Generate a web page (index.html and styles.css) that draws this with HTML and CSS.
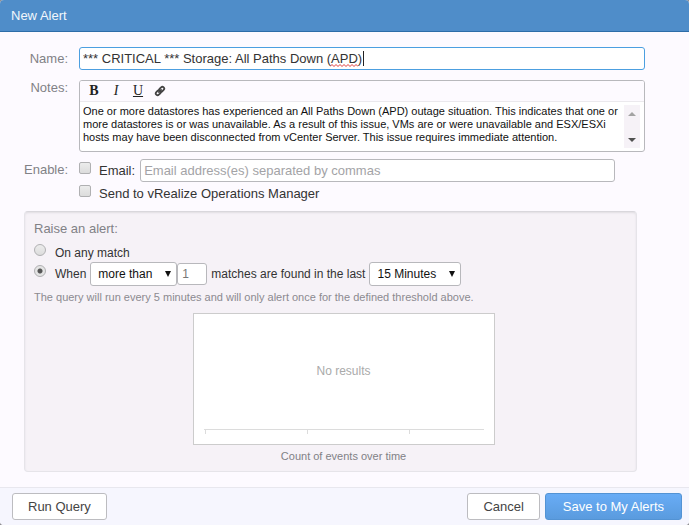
FILE: index.html
```html
<!DOCTYPE html>
<html lang="en">
<head>
<meta charset="utf-8">
<title>New Alert</title>
<link rel="stylesheet" href="styles.css">
</head>
<body>
<form class="dialog">
  <header class="dialog-header"><h1>New Alert</h1></header>
  <main class="dialog-body">
    <div class="fields">
      <label class="field-label" for="name">Name:</label>
      <div class="name-box">
        <input class="text-input name-input" id="name" type="text" spellcheck="false" value="*** CRITICAL *** Storage: All Paths Down (APD)">
        <svg class="squiggle" width="28" height="3" viewBox="0 0 28 3" aria-hidden="true"><path d="M0 2.5L2 .5 4 2.5 6 .5 8 2.5 10 .5 12 2.5 14 .5 16 2.5 18 .5 20 2.5 22 .5 24 2.5 26 .5 28 2.5"/></svg>
        <span class="caret"></span>
      </div>

      <label class="field-label notes-label" for="notes">Notes:</label>
      <div class="editor">
        <div class="toolbar">
          <button type="button" class="tool bold">B</button>
          <button type="button" class="tool italic">I</button>
          <button type="button" class="tool underline">U</button>
          <button type="button" class="tool" aria-label="Link"><svg width="12" height="12" viewBox="0 0 12 12"><g class="link-icon"><rect x="-5.2" y="-1.8" width="5.6" height="3.6" rx="1.8"/><rect x="-.4" y="-1.8" width="5.6" height="3.6" rx="1.8"/><path d="M-2.4 0H2.4"/></g></svg></button>
        </div>
        <div class="editor-content">
          <textarea id="notes" spellcheck="false">One or more datastores has experienced an All Paths Down (APD) outage situation. This indicates that one or more datastores is or was unavailable. As a result of this issue, VMs are or were unavailable and ESX/ESXi hosts may have been disconnected from vCenter Server. This issue requires immediate attention.</textarea>
          <div class="scrollbar" aria-hidden="true">
            <svg width="8" height="4" viewBox="0 0 8 4"><path fill="#a3a3a3" d="M4 0L8 4H0z"/></svg>
            <svg width="8" height="4" viewBox="0 0 8 4"><path fill="#505050" d="M0 0H8L4 4z"/></svg>
          </div>
        </div>
      </div>

      <span class="field-label enable-label">Enable:</span>
      <div class="enable">
        <div class="option email-row">
          <input class="tick" type="checkbox" id="email-on">
          <label for="email-on">Email:</label>
          <input class="text-input email-input" type="text" aria-label="Email addresses" placeholder="Email address(es) separated by commas">
        </div>
        <div class="option">
          <input class="tick" type="checkbox" id="vrops">
          <label for="vrops">Send to vRealize Operations Manager</label>
        </div>
      </div>
    </div>

    <section class="panel">
      <h2>Raise an alert:</h2>
      <div class="choice">
        <input class="tick radio" type="radio" name="when" id="any">
        <label for="any">On any match</label>
      </div>
      <div class="choice when-row">
        <input class="tick radio" type="radio" name="when" id="count" checked>
        <label for="count">When</label>
        <span class="select-box compare"><select aria-label="Comparison"><option>more than</option><option>less than</option></select></span>
        <input class="text-input threshold" type="text" aria-label="Threshold" value="1">
        <span class="matches">matches are found in the last</span>
        <span class="select-box period"><select aria-label="Period"><option>15 Minutes</option><option>1 Hour</option></select></span>
      </div>
      <p class="hint">The query will run every 5 minutes and will only alert once for the defined threshold above.</p>
      <figure class="chart">
        <div class="plot">
          <span class="empty">No results</span>
          <div class="axis"><i></i><i></i><i></i></div>
        </div>
        <figcaption>Count of events over time</figcaption>
      </figure>
    </section>
  </main>
  <footer class="dialog-footer">
    <button type="button" class="btn run">Run Query</button>
    <button type="button" class="btn">Cancel</button>
    <button type="submit" class="btn primary">Save to My Alerts</button>
  </footer>
</form>
</body>
</html>
```
FILE: styles.css
```css
* { box-sizing: border-box; }
body {
  margin: 0;
  background: #8f8f93;
  color: #333;
  font: 12px/16px "Liberation Sans", Arial, sans-serif;
}
h1, h2, p, figure { margin: 0; font-weight: normal; }
input, select, textarea, button { margin: 0; font-family: inherit; }

.dialog {
  display: flex;
  flex-direction: column;
  min-height: 100vh;
  border-radius: 4px;
  overflow: hidden;
  background: #fdfaff;
}
.dialog-header {
  height: 32px;
  padding: 0 11px;
  background: #4f8dc9;
  border-bottom: 1px solid #2d6da8;
}
.dialog-header h1 {
  font-size: 13px;
  line-height: 31px;
  color: #f2f7fc;
}
.dialog-body { flex: 1; padding: 15px 52px 15px 24px; }

.fields {
  display: grid;
  grid-template-columns: 44px 1fr;
  column-gap: 11px;
  margin-right: -8px;
}
.field-label {
  text-align: right;
  font-size: 13px;
  line-height: 24px;
  color: #818186;
}
.notes-label, .enable-label { line-height: 16px; }
.enable-label { margin-top: 10px; }

.text-input {
  height: 23px;
  padding: 0 3px;
  border: 1px solid #b8b8bc;
  border-radius: 3px;
  background: #fff;
  color: #333;
  font-size: 13px;
  outline: 0;
}
.name-box { position: relative; margin-bottom: 10px; }
.name-input { display: block; width: 100%; border-color: #4c9fe0; }
.squiggle { position: absolute; left: 251px; top: 17px; fill: none; stroke: #e03a3a; }
.caret { position: absolute; left: 284px; top: 4px; width: 1px; height: 15px; background: #222; }

.editor {
  height: 72px;
  border: 1px solid #b8b8bc;
  border-radius: 3px;
  background: #fff;
  overflow: hidden;
}
.toolbar {
  display: flex;
  height: 21px;
  padding-left: 3px;
  background: #fdfaff;
  border-bottom: 1px solid #ebe9ed;
}
.tool {
  width: 22px;
  padding: 0;
  border: 0;
  background: none;
  color: #222;
  font: 14px/20px "Liberation Serif", serif;
}
.tool svg { display: block; margin: 0 auto; }
.bold { font-weight: bold; }
.italic { font-style: italic; }
.underline { text-decoration: underline; }
.link-icon { fill: none; stroke: #444; stroke-width: 1.8; transform: translate(6px, 6px) rotate(-45deg); }

.editor-content { display: flex; padding: 3px 4px 3px 3px; }
textarea {
  flex: 1;
  height: 43px;
  padding: 0;
  border: 0;
  outline: 0;
  resize: none;
  overflow: hidden;
  background: none;
  color: #111;
  font-size: 11px;
  line-height: 13px;
}
.scrollbar {
  display: flex;
  flex-direction: column;
  justify-content: space-between;
  align-items: center;
  width: 16px;
  height: 43px;
  padding: 7px 0 6px;
  background: #f6f2f7;
}

.enable { padding-top: 7px; }
.option, .choice { display: flex; align-items: center; }
.option { height: 23px; font-size: 13px; }
.tick {
  appearance: none;
  align-self: flex-start;
  width: 12px;
  height: 12px;
  margin-top: 3px;
  margin-right: 8px;
  border: 1px solid #b0b0b2;
  border-radius: 2px;
  background: linear-gradient(#ececec, #dcdcdc);
}
.email-input { flex: 1; margin: 0 30px 0 5px; }
.email-input::placeholder { color: #a3a3a6; }

.panel {
  margin-top: 6px;
  padding: 9px 9px 7px;
  border: 1px solid #e6e4e9;
  border-top-color: #d9d7dc;
  border-radius: 4px;
  background: #f6f2f7;
  box-shadow: inset 0 1px 2px #e0dde2;
}
.panel h2 { font-size: 13px; line-height: 16px; color: #818186; }
.choice { height: 24px; margin-top: 4px; }
.radio { border-radius: 50%; margin-right: 9px; }
.radio:checked { background: radial-gradient(circle, #555 0 2px, #e4e4e4 3px); }
.when-row { margin-top: -3px; }
.select-box { position: relative; display: block; height: 24px; }
.select-box::after {
  content: "";
  position: absolute;
  right: 6px;
  top: 9px;
  border: 3px solid transparent;
  border-top: 6px solid #111;
  border-bottom: 0;
  pointer-events: none;
}
.select-box select {
  appearance: none;
  display: block;
  width: 100%;
  height: 24px;
  padding: 0 7px;
  border: 1px solid #b8b8bc;
  border-radius: 3px;
  background: #fff;
  color: #111;
  font-size: 12px;
}
.compare { width: 87px; margin-left: 4px; }
.period { width: 92px; margin-left: 4px; }
.threshold { width: 30px; height: 22px; padding-left: 4px; font-size: 12px; color: #777; }
.matches { margin-left: 4px; }
.hint { margin-top: 4px; font-size: 11px; line-height: 14px; color: #8c8a90; }

.chart { width: 328px; margin: 9px auto 0; padding-left: 26px; text-align: center; }
.plot {
  display: flex;
  flex-direction: column;
  height: 132px;
  padding: 0 10px 10px;
  border: 1px solid #ccc;
  background: #fff;
}
.empty { flex: 1; line-height: 115px; color: #aaa; }
.axis {
  display: grid;
  grid-template-columns: repeat(2, 102px) 1fr;
  height: 5px;
  padding-left: 1px;
  border-top: 1px solid #dcdcdc;
}
.axis i { border-left: 1px solid #dcdcdc; }
figcaption { margin-top: 3px; font-size: 11px; line-height: 16px; color: #818186; }

.dialog-footer {
  display: flex;
  gap: 5px;
  height: 38px;
  padding: 5px 7px 0 12px;
  border-top: 1px solid #e8e7ee;
  background: #f6f6fe;
}
.btn {
  height: 27px;
  padding: 0 15px;
  border: 1px solid #bcbcc0;
  border-radius: 3px;
  background: #fff;
  color: #444;
  font-size: 13px;
}
.run { margin-right: auto; }
.primary {
  padding: 0 17px;
  border-color: #5393d4;
  background: linear-gradient(#68acf6, #5a9bde);
  color: #fff;
}
```
